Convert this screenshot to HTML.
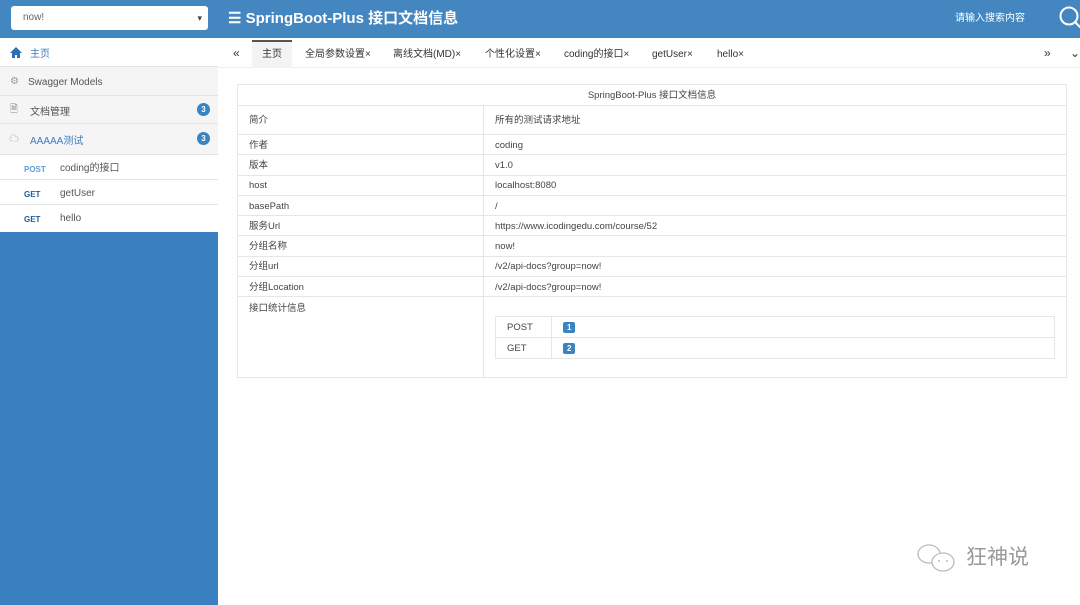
<!DOCTYPE html>
<html><head><meta charset="utf-8"><style>
*{box-sizing:border-box;margin:0;padding:0}
body{width:1080px;height:605px;overflow:hidden;background:#fff;font-family:"Liberation Sans","Noto Sans CJK SC",sans-serif;font-size:10px;line-height:12px;color:#333;position:relative}
.hdr{position:absolute;left:0;top:0;width:1080px;height:38px;background:#4486c0}
.sel{position:absolute;left:11px;top:6px;width:197px;height:24px;background:#fff;border-radius:3px;color:#666;font-size:10px;padding:6px 12px}
.sel:after{content:"▾";position:absolute;right:6px;top:6px;font-size:9px;color:#444}
.title{position:absolute;left:228px;top:10px;color:#fff;font-size:15px;line-height:18px;font-weight:bold}
.srch{position:absolute;left:955px;top:13px;color:#fff;font-size:10px}
.side{position:absolute;left:0;top:38px;width:218px;height:567px;background:#3a80c0}
.sw{position:absolute;left:0;top:0;width:218px;height:194px;background:#fff}
.it{position:absolute;left:0;width:218px;border-bottom:1px solid #e4e4e4;font-size:10px;color:#555}
.badge{position:absolute;right:8px;width:13px;height:13px;border-radius:50%;background:#3b84c4;color:#fff;font-size:8px;text-align:center;line-height:13px;font-weight:bold}
.m{position:absolute;left:24px;font-weight:bold;font-size:8px}
.tabs{position:absolute;left:218px;top:38px;width:862px;height:30px;border-bottom:1px solid #eee;font-size:10px;color:#333}
.tabs span{position:absolute;top:11px}
table{position:absolute;left:237px;top:84px;width:830px;border-collapse:collapse;font-size:9.5px;line-height:11px;color:#444}
td{border:1px solid #e6e6e6;padding:1px 11px 0;height:20.3px;vertical-align:middle}
</style></head><body>
<div class="hdr">
<div class="sel">now!</div>
<div class="title">☰ SpringBoot-Plus 接口文档信息</div>
<div class="srch">请输入搜索内容</div>
<svg style="position:absolute;left:1058px;top:5px" width="24" height="26"><circle cx="11" cy="11" r="8.5" fill="none" stroke="#fff" stroke-width="2"/><line x1="17" y1="17" x2="24" y2="24" stroke="#fff" stroke-width="2"/></svg>
</div>
<div class="side"><div class="sw">
<div class="it" style="top:0;height:29px;background:#fff;color:#3a7dc0"><svg style="position:absolute;left:10px;top:9px" width="12" height="11"><path d="M6 0L0 6h2v5h3V8h2v3h3V6h2z" fill="#2d6fb0"/></svg><span style="position:absolute;left:30px;top:11px">主页</span></div>
<div class="it" style="top:29px;height:29px;background:#f5f5f5"><span style="position:absolute;left:10px;top:9px;color:#999">⚙</span><span style="position:absolute;left:28px;top:10px">Swagger Models</span></div>
<div class="it" style="top:58px;height:28px;background:#f5f5f5"><span style="position:absolute;left:10px;top:8px;color:#888">🗎</span><span style="position:absolute;left:30px;top:11px">文档管理</span><span class="badge" style="top:7px">3</span></div>
<div class="it" style="top:86px;height:31px;background:#f5f5f5;color:#3a7dc0"><span style="position:absolute;left:9px;top:10px;color:#999">☁</span><span style="position:absolute;left:30px;top:12px">AAAAA测试</span><span class="badge" style="top:8px">3</span></div>
<div class="it" style="top:117px;height:25px"><span class="m" style="top:9px;color:#5aa0de">POST</span><span style="position:absolute;left:60px;top:8px">coding的接口</span></div>
<div class="it" style="top:142px;height:25px"><span class="m" style="top:9px;color:#1d5d96">GET</span><span style="position:absolute;left:60px;top:8px">getUser</span></div>
<div class="it" style="top:167px;height:27px;border:none"><span class="m" style="top:9px;color:#1d5d96">GET</span><span style="position:absolute;left:60px;top:8px">hello</span></div>
</div></div>
<div class="tabs">
<span style="left:15px;top:9px;font-size:12px">«</span>
<div style="position:absolute;left:34px;top:2px;width:40px;height:28px;background:#f3f3f3;border-top:2px solid #555"></div>
<span style="left:44px">主页</span>
<span style="left:87px">全局参数设置×</span>
<span style="left:175px">离线文档(MD)×</span>
<span style="left:267px">个性化设置×</span>
<span style="left:346px">coding的接口×</span>
<span style="left:434px">getUser×</span>
<span style="left:499px">hello×</span>
<span style="left:826px;top:9px;font-size:12px">»</span>
<span style="left:852px;top:9px;font-size:12px">⌄</span>
</div>
<table>
<tr><td colspan="2" style="text-align:center;height:21px">SpringBoot-Plus 接口文档信息</td></tr>
<tr><td style="width:247px;height:29px">简介</td><td>所有的测试请求地址</td></tr>
<tr><td>作者</td><td>coding</td></tr>
<tr><td>版本</td><td>v1.0</td></tr>
<tr><td>host</td><td>localhost:8080</td></tr>
<tr><td>basePath</td><td>/</td></tr>
<tr><td>服务Url</td><td>https://www.icodingedu.com/course/52</td></tr>
<tr><td>分组名称</td><td>now!</td></tr>
<tr><td>分组url</td><td>/v2/api-docs?group=now!</td></tr>
<tr><td>分组Location</td><td>/v2/api-docs?group=now!</td></tr>
<tr><td style="vertical-align:top;padding-top:6px;height:81px">接口统计信息</td><td style="vertical-align:top;padding-top:19px">
<table style="position:static;width:560px"><tr><td style="width:56px;height:21px">POST</td><td><span style="background:#3b84c4;color:#fff;font-size:8px;font-weight:bold;padding:1px 4px;border-radius:2px">1</span></td></tr>
<tr><td style="height:20px">GET</td><td><span style="background:#3b84c4;color:#fff;font-size:8px;font-weight:bold;padding:1px 4px;border-radius:2px">2</span></td></tr></table>
</td></tr>
</table>
<svg style="position:absolute;left:915px;top:542px" width="46" height="32"><ellipse cx="14" cy="12" rx="11" ry="9" fill="none" stroke="#bbb" stroke-width="1.3"/><ellipse cx="28" cy="20" rx="11" ry="9" fill="#fff" stroke="#bbb" stroke-width="1.3"/><circle cx="24" cy="19" r="1" fill="#bbb"/><circle cx="32" cy="19" r="1" fill="#bbb"/></svg>
<div style="position:absolute;left:966px;top:545px;color:#999;font-size:21px;line-height:26px">狂神说</div>
</body></html>
